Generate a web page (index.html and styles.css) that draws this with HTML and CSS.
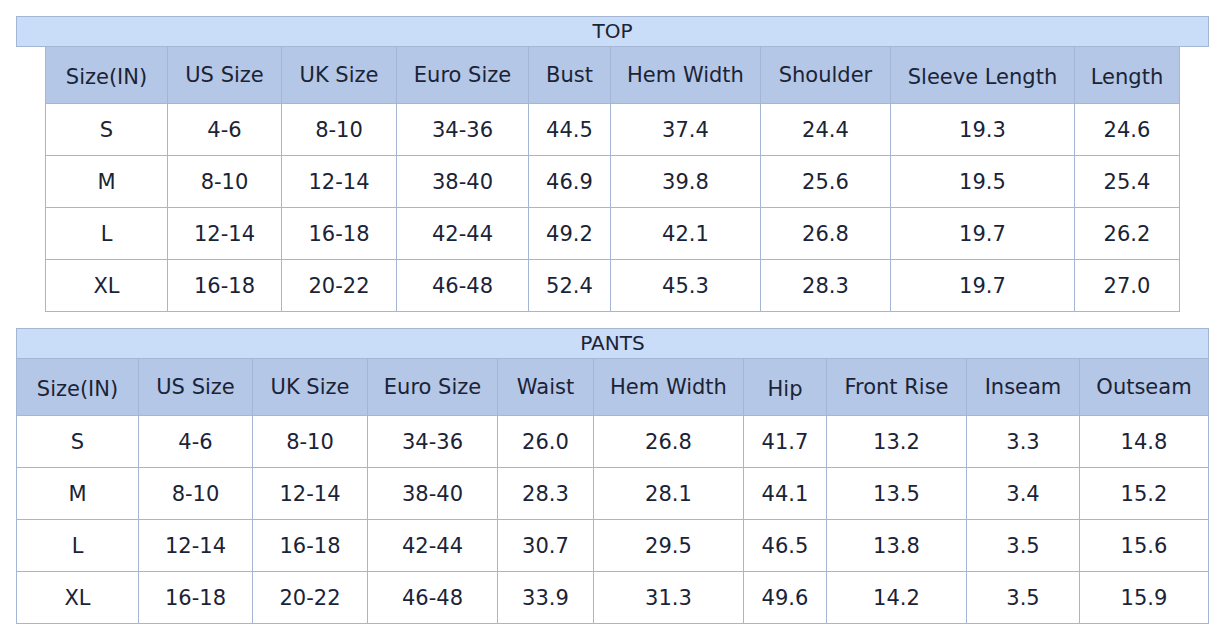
FILE: index.html
```html
<!DOCTYPE html>
<html>
<head>
<meta charset="utf-8">
<link rel="stylesheet" href="styles.css">
</head>
<body>
<div class="page">
  <section class="chart">
    <div class="title">TOP</div>
    <table class="grid top">
      <colgroup>
        <col style="width:122px"><col style="width:114px"><col style="width:115px"><col style="width:132px"><col style="width:82px"><col style="width:150px"><col style="width:130px"><col style="width:184px"><col style="width:105px">
      </colgroup>
      <thead>
        <tr><th class="low">Size(IN)</th><th>US Size</th><th>UK Size</th><th>Euro Size</th><th>Bust</th><th>Hem Width</th><th>Shoulder</th><th class="low">Sleeve Length</th><th class="low">Length</th></tr>
      </thead>
      <tbody>
        <tr><td>S</td><td>4-6</td><td>8-10</td><td>34-36</td><td>44.5</td><td>37.4</td><td>24.4</td><td>19.3</td><td>24.6</td></tr>
        <tr><td>M</td><td>8-10</td><td>12-14</td><td>38-40</td><td>46.9</td><td>39.8</td><td>25.6</td><td>19.5</td><td>25.4</td></tr>
        <tr><td>L</td><td>12-14</td><td>16-18</td><td>42-44</td><td>49.2</td><td>42.1</td><td>26.8</td><td>19.7</td><td>26.2</td></tr>
        <tr><td>XL</td><td>16-18</td><td>20-22</td><td>46-48</td><td>52.4</td><td>45.3</td><td>28.3</td><td>19.7</td><td>27.0</td></tr>
      </tbody>
    </table>
  </section>
  <section class="chart">
    <div class="title">PANTS</div>
    <table class="grid pants">
      <colgroup>
        <col style="width:122px"><col style="width:114px"><col style="width:115px"><col style="width:130px"><col style="width:96px"><col style="width:150px"><col style="width:83px"><col style="width:140px"><col style="width:113px"><col style="width:129px">
      </colgroup>
      <thead>
        <tr><th class="low">Size(IN)</th><th>US Size</th><th>UK Size</th><th>Euro Size</th><th>Waist</th><th>Hem Width</th><th class="low">Hip</th><th>Front Rise</th><th>Inseam</th><th>Outseam</th></tr>
      </thead>
      <tbody>
        <tr><td>S</td><td>4-6</td><td>8-10</td><td>34-36</td><td>26.0</td><td>26.8</td><td>41.7</td><td>13.2</td><td>3.3</td><td>14.8</td></tr>
        <tr><td>M</td><td>8-10</td><td>12-14</td><td>38-40</td><td>28.3</td><td>28.1</td><td>44.1</td><td>13.5</td><td>3.4</td><td>15.2</td></tr>
        <tr><td>L</td><td>12-14</td><td>16-18</td><td>42-44</td><td>30.7</td><td>29.5</td><td>46.5</td><td>13.8</td><td>3.5</td><td>15.6</td></tr>
        <tr><td>XL</td><td>16-18</td><td>20-22</td><td>46-48</td><td>33.9</td><td>31.3</td><td>49.6</td><td>14.2</td><td>3.5</td><td>15.9</td></tr>
      </tbody>
    </table>
  </section>
</div>
</body>
</html>
```

FILE: styles.css
```css
html, body {
  margin: 0;
  padding: 0;
  background: #ffffff;
}
.page {
  width: 1193px;
  margin: 16px 0 0 16px;
  font-family: "DejaVu Sans", Verdana, sans-serif;
  color: #1b2336;
  display: flex;
  flex-direction: column;
  gap: 16px;
}
.chart {
  display: flex;
  flex-direction: column;
  align-items: center;
}
.title {
  box-sizing: border-box;
  width: 100%;
  height: 31px;
  background: #c9dcf8;
  border: 1px solid #a4b6d3;
  text-align: center;
  font-size: 20px;
  line-height: 29px;
}
.grid {
  border-collapse: collapse;
  table-layout: fixed;
  margin-top: -1px;
}
.grid.top { width: 1135px; }
.grid.pants { width: 1193px; }
.grid th, .grid td {
  border: 1px solid #a4b6d3;
  padding: 0;
  text-align: center;
  vertical-align: middle;
  font-size: 21px;
  font-weight: normal;
}
.grid th {
  background: #b4c7e6;
  height: 56px;
}
.grid th.low {
  height: 52px;
  padding-top: 4px;
}
.grid td {
  height: 51px;
  background: #ffffff;
}
```
